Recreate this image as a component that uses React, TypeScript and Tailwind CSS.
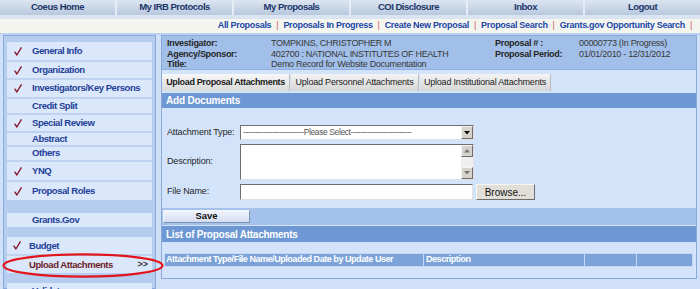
import React from "react";

function Check() {
  return (
    <svg width="8" height="9" viewBox="0 0 8 9" className="shrink-0">
      <path d="M1 5.2 L2.9 8 L7.2 0.8" fill="none" stroke="#8a1c2c" strokeWidth="1.4" strokeLinecap="round" strokeLinejoin="round" />
    </svg>
  );
}

const navTabs = ["Coeus Home", "My IRB Protocols", "My Proposals", "COI Disclosure", "Inbox", "Logout"];
const links = ["All Proposals", "Proposals In Progress", "Create New Proposal", "Proposal Search", "Grants.gov Opportunity Search"];

const group1 = [
  { t: "General Info", c: true, h: "h-[20px]" },
  { t: "Organization", c: true, h: "h-[18px]" },
  { t: "Investigators/Key Persons", c: true, h: "h-[19px]" },
  { t: "Credit Split", c: false, h: "h-[16px]" },
  { t: "Special Review", c: true, h: "h-[18px]" },
  { t: "Abstract", c: false, h: "h-[14px]" },
  { t: "Others", c: false, h: "h-[15px]" },
  { t: "YNQ", c: true, h: "h-[20px]" },
  { t: "Proposal Roles", c: true, h: "h-[18px]" },
];

function SideRow({ t, c, h, last }: { t: string; c: boolean; h: string; last?: boolean }) {
  return (
    <div className={`${h} flex items-center ${last ? "" : "border-b-2 border-[#bfd3f1]"}`}>
      <div className="w-[25px] pl-[7px] flex items-center">{c ? <Check /> : null}</div>
      <span className="text-[9.5px] font-bold tracking-[-0.45px] text-[#1f3f99]">{t}</span>
    </div>
  );
}

export default function App() {
  return (
    <div className="relative w-[700px] h-[289px] overflow-hidden bg-[#cfe0f8] font-['Liberation_Sans',Arial,sans-serif]">
      {/* top nav */}
      <div className="flex h-[15px] gap-[2px] bg-[#e6edf6]">
        {navTabs.map((t) => (
          <div
            key={t}
            className="flex-1 flex items-center justify-center bg-gradient-to-b from-[#dce5f1] to-[#b8c8de] text-[9.5px] font-bold tracking-[-0.5px] text-[#1c3668]"
          >
            {t}
          </div>
        ))}
      </div>
      <div className="h-[4px] bg-[#dbe5f2]" />
      {/* link row */}
      <div className="h-[14px] bg-[#f5f5f0] flex items-center justify-end pr-[3px] text-[9px] font-bold tracking-[-0.3px] text-[#2146a8]">
        {links.map((l) => (
          <React.Fragment key={l}>
            <span>{l}</span>
            <span className="mx-[5px] font-normal text-[#d35a5a]">|</span>
          </React.Fragment>
        ))}
      </div>

      {/* body */}
      <div className="flex pt-[2px] bg-[#bcd1ef] h-[256px]">
        <div className="flex w-full bg-[#cfe0f8]">
          {/* sidebar */}
          <div className="ml-[3px] w-[153px] border border-[#8aaade] bg-[#b5cdef] px-[3px] pt-[6px] flex flex-col">
            <div className="bg-[#dbe7fa]">
              {group1.map((r, i) => (
                <SideRow key={r.t} {...r} last={i === group1.length - 1} />
              ))}
            </div>
            <div className="mt-[13px] h-[15px] bg-[#dbe7fa] flex items-center pl-[25px] text-[9.5px] font-bold tracking-[-0.45px] text-[#1f3f99]">
              Grants.Gov
            </div>
            <div className="mt-[10px] bg-[#dbe7fa]">
              <div className="h-[19px] flex items-center border-b-2 border-[#bfd3f1]">
                <div className="w-[22px] pl-[6px] flex items-center">
                  <Check />
                </div>
                <span className="text-[9.5px] font-bold tracking-[-0.45px] text-[#1f3f99]">Budget</span>
              </div>
              <div className="h-[17px] flex items-center pl-[22px] pr-[4px] justify-between">
                <span className="text-[9.5px] font-bold tracking-[-0.45px] text-[#6e1d28]">Upload Attachments</span>
                <span className="text-[9px] font-bold text-[#333]">&gt;&gt;</span>
              </div>
            </div>
            <div className="mt-[10px] h-[18px] bg-[#dbe7fa] flex items-start pt-[1px] pl-[25px] text-[9.5px] font-bold tracking-[-0.45px] text-[#1f3f99]">
              Validate
            </div>
          </div>

          {/* main panel */}
          <div className="ml-[5px] mr-[3px] flex-1 self-start border border-[#8aaade] bg-[#d3e3fa] flex flex-col">
            {/* info box */}
            <div className="h-[34px] bg-[#a1bfe9] border-b border-[#8eaedf] pt-[2px] pl-[5px]">
              <div className="grid grid-cols-[104px_224px_84px_1fr] text-[9px] leading-[10.5px] tracking-[-0.3px]">
                <span className="font-bold text-[#262626]">Investigator:</span>
                <span className="text-[#383838]">TOMPKINS, CHRISTOPHER M</span>
                <span className="font-bold text-[#262626]">Proposal # :</span>
                <span className="text-[#383838]">00000773 (In Progress)</span>
                <span className="font-bold text-[#262626]">Agency/Sponsor:</span>
                <span className="text-[#383838]">402700 : NATIONAL INSTITUTES OF HEALTH</span>
                <span className="font-bold text-[#262626]">Proposal Period:</span>
                <span className="text-[#383838]">01/01/2010 - 12/31/2012</span>
                <span className="font-bold text-[#262626]">Title:</span>
                <span className="text-[#383838]">Demo Record for Website Documentation</span>
                <span />
                <span />
              </div>
            </div>
            {/* tabs */}
            <div className="mt-[4px] h-[17px] flex gap-[1px]">
              <div className="w-[128px] flex items-center justify-center bg-gradient-to-b from-[#f8f8f8] to-[#dadada] border-r border-[#bdbdbd] text-[9px] font-bold tracking-[-0.35px] text-[#1a1a1a]">
                Upload Proposal Attachments
              </div>
              <div className="w-[128px] flex items-center justify-center bg-gradient-to-b from-[#f4f4f4] to-[#d6d6d6] border-r border-[#bdbdbd] text-[9px] tracking-[-0.2px] text-[#1a1a1a]">
                Upload Personnel Attachments
              </div>
              <div className="w-[131px] flex items-center justify-center bg-gradient-to-b from-[#f4f4f4] to-[#d6d6d6] border-r border-[#bdbdbd] text-[9px] tracking-[-0.2px] text-[#1a1a1a]">
                Upload Institutional Attachments
              </div>
            </div>
            {/* add documents */}
            <div className="mt-[2px] h-[15px] bg-[#6d98d3] flex items-center pl-[4px] text-[10px] font-bold tracking-[-0.2px] text-white">
              Add Documents
            </div>
            <div className="h-[100px] pt-[17px] pl-[5px] flex flex-col">
              <div className="flex items-center h-[15px]">
                <span className="w-[73px] text-[9px] tracking-[-0.15px] text-[#262626]">Attachment Type:</span>
                <div className="w-[234px] h-[15px] bg-white border border-t-[#6e6e6e] border-l-[#6e6e6e] border-r-[#e0e0e0] border-b-[#e0e0e0] flex items-center">
                  <span className="flex-1 text-[8.5px] text-[#555] pl-[2px] tracking-[-0.4px] overflow-hidden whitespace-nowrap">
                    -------------------------Please Select-------------------------
                  </span>
                  <div className="w-[12px] h-[13px] bg-[#d6d3cc] border border-[#f4f4f4] border-r-[#6d6d6d] border-b-[#6d6d6d] flex items-center justify-center">
                    <svg width="6" height="4" viewBox="0 0 6 4"><path d="M0 0 H6 L3 3.5 Z" fill="#111" /></svg>
                  </div>
                </div>
              </div>
              <div className="flex items-center mt-[4px] h-[36px]">
                <span className="w-[73px] text-[9px] tracking-[-0.15px] text-[#262626]">Description:</span>
                <div className="w-[234px] h-[36px] bg-white border border-t-[#6e6e6e] border-l-[#6e6e6e] border-r-[#e0e0e0] border-b-[#e0e0e0] flex justify-end">
                  <div className="w-[12px] h-full bg-[#efefef] flex flex-col justify-between">
                    <div className="h-[12px] bg-[#d6d3cc] border border-[#f4f4f4] border-r-[#6d6d6d] border-b-[#6d6d6d] flex items-center justify-center">
                      <svg width="6" height="4" viewBox="0 0 6 4"><path d="M0 3.5 H6 L3 0 Z" fill="#777" /></svg>
                    </div>
                    <div className="h-[12px] bg-[#d6d3cc] border border-[#f4f4f4] border-r-[#6d6d6d] border-b-[#6d6d6d] flex items-center justify-center">
                      <svg width="6" height="4" viewBox="0 0 6 4"><path d="M0 0 H6 L3 3.5 Z" fill="#777" /></svg>
                    </div>
                  </div>
                </div>
              </div>
              <div className="flex items-center mt-[4px] h-[16px]">
                <span className="w-[73px] text-[9px] tracking-[-0.15px] text-[#262626]">File Name:</span>
                <div className="w-[233px] h-[16px] bg-white border border-t-[#6e6e6e] border-l-[#6e6e6e] border-r-[#e0e0e0] border-b-[#e0e0e0]" />
                <div className="ml-[3px] w-[59px] h-[16px] bg-[#e2dfd8] border border-[#f6f6f6] border-r-[#6d6d6d] border-b-[#6d6d6d] flex items-center justify-center text-[10px] text-[#111]">
                  Browse...
                </div>
              </div>
            </div>
            {/* save strip */}
            <div className="h-[17px] bg-[#a3c1eb] pt-[2px] pl-[1px]">
              <div className="w-[87px] h-[13px] bg-gradient-to-b from-[#eff3fc] to-[#d4def2] border border-[#f4f6fb] border-r-[#7f8fae] border-b-[#7f8fae] flex items-center justify-center text-[9.5px] font-bold text-[#111]">
                Save
              </div>
            </div>
            <div className="mt-[1px] h-[16px] bg-[#6d98d3] flex items-center pl-[4px] text-[10px] font-bold tracking-[-0.25px] text-white">
              List of Proposal Attachments
            </div>
            <div className="h-[36px] pt-[11px] pl-[2px] pr-[3px]">
              <div className="flex h-[14px] border border-[#c6d8f3] bg-[#7ca3d9] text-[9px] font-bold tracking-[-0.45px] text-white">
                <div className="w-[259px] flex items-center pl-[1px] border-r border-[#c6d8f3]">Attachment Type/File Name/Uploaded Date by Update User</div>
                <div className="w-[161px] flex items-center pl-[2px] border-r border-[#c6d8f3]">Description</div>
                <div className="w-[52px] border-r border-[#c6d8f3]" />
                <div className="flex-1" />
              </div>
            </div>
          </div>
        </div>
      </div>

      {/* red highlight ellipse */}
      <svg className="absolute left-[1px] top-[252px]" width="164" height="27" viewBox="0 0 164 27">
        <ellipse cx="82" cy="13.5" rx="79.5" ry="11.2" fill="none" stroke="#e2141c" strokeWidth="2.2" />
      </svg>
    </div>
  );
}
